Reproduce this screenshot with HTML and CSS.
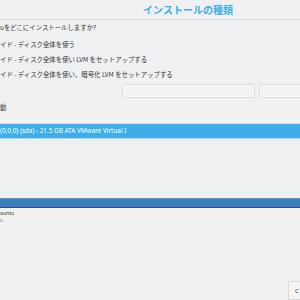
FILE: index.html
```html
<!DOCTYPE html>
<html>
<head>
<link rel="stylesheet" href="styles.css">
</head>
<body>
  <div id="page">
    <header class="title-bar">
      <h1>インストールの種類</h1>
    </header>

    <div class="options">
      <p class="question">uをどこにインストールしますか?</p>
      <p class="option">イド - ディスク全体を使う</p>
      <p class="option">イド - ディスク全体を使い LVM をセットアップする</p>
      <p class="option">イド - ディスク全体を使い、暗号化 LVM をセットアップする</p>
    </div>

    <div class="fields">
      <input type="text" class="field field-wide">
      <input type="text" class="field">
    </div>

    <p class="section-label">動</p>

    <ul class="drives">
      <li class="drive selected">(0,0,0) (sda) - 21.5 GB ATA VMware Virtual I</li>
    </ul>

    <div class="partition-bar">
      <div class="bar-top"></div>
      <div class="bar-fill"></div>
    </div>

    <div class="legend">
      <span class="legend-name">ountu</span>
      <span class="legend-size">s</span>
    </div>

    <footer class="buttons">
      <button class="btn">C</button>
    </footer>
  </div>
</body>
</html>
```

FILE: styles.css
```css
body {
  margin: 0;
  padding: 0;
  background-color: #eff0f1;
  font-family: "Noto Sans CJK JP", "Noto Sans", sans-serif;
  color: #31363b;
}

#page {
  width: 300px;
  height: 300px;
  overflow: hidden;
  display: flex;
  flex-direction: column;
}

.title-bar {
  height: 19px;
  border-bottom: 1px solid #d3d5d7;
  padding-left: 76px;
  text-align: center;
}

.title-bar h1 {
  margin: 0;
  font-size: 10px;
  line-height: 19px;
  font-weight: bold;
  color: #3daee9;
}

.options {
  padding-top: 3px;
}

.options p {
  margin: 0;
  font-size: 6.4px;
  line-height: 10px;
  white-space: nowrap;
}

.question {
  margin-bottom: 7px !important;
}

.option {
  margin-bottom: 5px !important;
}

.fields {
  display: flex;
  gap: 4px;
  padding-left: 122px;
  margin-top: -1px;
}

.field {
  box-sizing: border-box;
  height: 14px;
  width: 133px;
  flex-shrink: 0;
  margin: 0;
  padding: 0;
  border: 1px solid #dcdddf;
  border-radius: 2px;
  background-color: #f2f3f4;
  box-shadow: inset 0 0 0 1px #f7f7f8;
}

.field-wide {
  width: 133px;
}

.section-label {
  margin: 5px 0 0;
  font-size: 6.4px;
  line-height: 10px;
}

.drives {
  list-style: none;
  margin: 10px 0 0;
  padding: 0;
}

.drive {
  height: 14px;
  line-height: 14px;
  font-family: "Noto Sans", sans-serif;
  font-size: 6.4px;
  white-space: nowrap;
}

.drive.selected {
  background-color: #3daee9;
  color: #ffffff;
  border-top: 1px solid #f1d9ec;
  border-bottom: 1px solid #a9d8f1;
}

.partition-bar {
  margin-top: 53px;
}

.bar-top {
  height: 4px;
  border-top: 1px solid #dbeaf5;
  border-bottom: 1px solid #f4ece3;
}

.bar-fill {
  height: 8px;
  background-color: #3b7dbd;
  border-top: 1px solid #5d93c6;
  border-bottom: 1px solid #2a5784;
}

.legend {
  display: flex;
  flex-direction: column;
  font-family: "Noto Sans", sans-serif;
  font-size: 5px;
  line-height: 6.5px;
  padding-top: 2px;
  background: linear-gradient(#eff0f1 0, #f4efe9 3px, #f4efe9 8px, #eff0f1 9px);
}

.legend-name {
  color: #31363b;
}

.legend-size {
  color: #7f8c8d;
}

.buttons {
  margin-top: auto;
  display: flex;
  justify-content: flex-end;
}

.btn {
  box-sizing: border-box;
  width: 12px;
  height: 19px;
  padding: 0 0 0 6px;
  border: 1px solid #d6d8da;
  border-right: none;
  border-radius: 2px 0 0 2px;
  background-color: #f3f4f4;
  font-family: "Noto Sans", sans-serif;
  font-size: 6px;
  color: #31363b;
  text-align: left;
}
```
